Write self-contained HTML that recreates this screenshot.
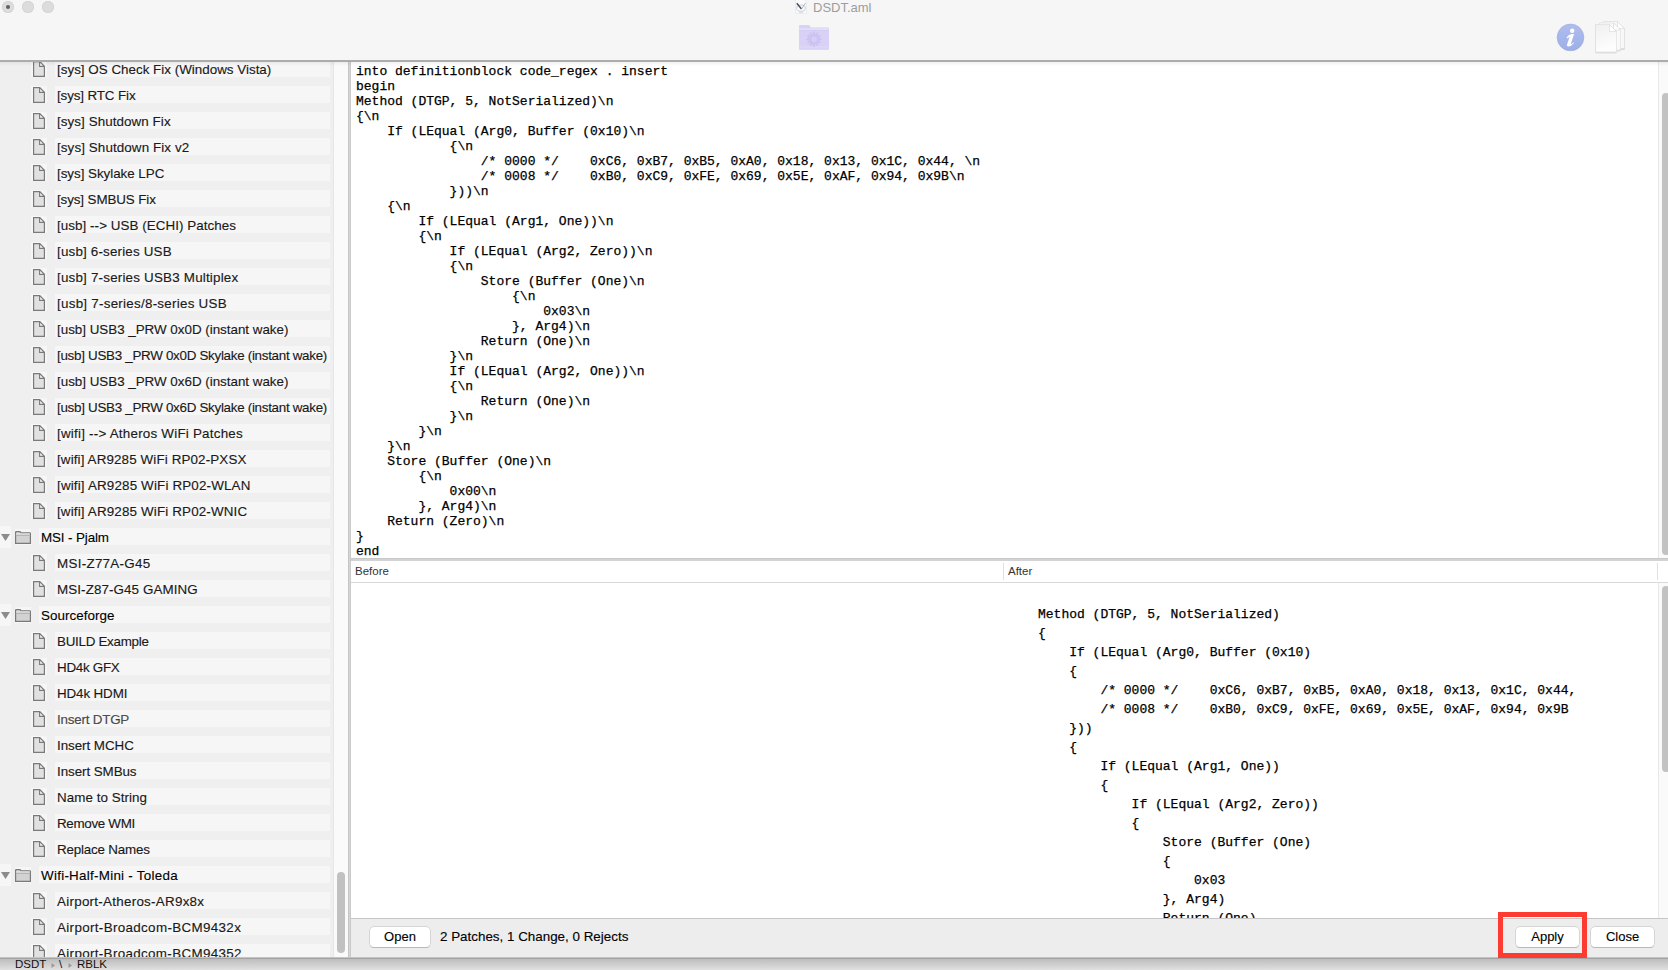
<!DOCTYPE html>
<html><head><meta charset="utf-8">
<style>
html,body{margin:0;padding:0;}
body{width:1668px;height:970px;overflow:hidden;position:relative;background:#f6f6f6;font-family:"Liberation Sans",sans-serif;}
.abs{position:absolute;}
#titlebar{left:0;top:0;width:1668px;height:60px;background:#f6f6f6;}
#tbline{left:0;top:60px;width:1668px;height:2px;background:#acacac;}
.tl{position:absolute;top:1px;width:12px;height:12px;border-radius:50%;background:#dcdcdc;box-shadow:inset 0 0 0 0.6px #cfcfcf;}
#title{left:813px;top:0px;font-size:13px;color:#9d9d9d;white-space:pre;}
#sidebar{left:0;top:62px;width:333px;height:895px;background:#efefef;overflow:hidden;}
.row{position:absolute;left:0;height:26px;width:333px;}
.ib{position:absolute;background:#f6f6f6;}
.tx{position:absolute;font-size:13.4px;color:#000;white-space:pre;line-height:17px;-webkit-text-stroke:0.12px #000;}
#sbtrack{left:333px;top:62px;width:15px;height:895px;background:#fafafa;border-left:1px solid #e6e6e6;box-sizing:border-box;}
#sbthumb{left:337px;top:872px;width:8px;height:81px;border-radius:4px;background:#c1c1c1;}
#sheetL{left:348px;top:62px;width:3px;height:896px;background:linear-gradient(to right,#c5c5c5 0,#c5c5c5 1px,#d6d6d6 1px,#d6d6d6 2px,#cacaca 2px,#cacaca 3px);}
#code{left:351px;top:62px;width:1307px;height:496px;background:#fff;overflow:hidden;}
#code pre{margin:0;position:absolute;left:5px;top:2px;font-family:"Liberation Mono",monospace;font-size:13px;line-height:15px;color:#000;-webkit-text-stroke:0.25px #000;}
.vtrack{background:#fafafa;border-left:1px solid #e8e8e8;box-sizing:border-box;}
.thumb{background:#c2c2c2;border-radius:4px;}
#split{left:351px;top:558px;width:1317px;height:3px;background:#d3d3d3;border-top:1px solid #c8c8c8;box-sizing:border-box;}
#hdr{left:351px;top:561px;width:1317px;height:22px;background:#fff;border-bottom:1px solid #d9d9d9;box-sizing:border-box;}
.hl{position:absolute;top:1px;font-size:11.5px;color:#333;line-height:18px;}
.hdiv{position:absolute;top:2px;width:1px;height:17px;background:#e0e0e0;}
#diff{left:351px;top:583px;width:1307px;height:335px;background:#fff;overflow:hidden;}
#diff pre{margin:0;position:absolute;left:687px;top:22px;font-family:"Liberation Mono",monospace;font-size:13px;line-height:19px;color:#000;-webkit-text-stroke:0.25px #000;}
#bbar{left:351px;top:918px;width:1317px;height:40px;background:#ededed;border-top:1px solid #c6c6c6;box-sizing:border-box;}
.btn{position:absolute;height:20px;background:#fff;border-radius:4px;box-shadow:0 0 0 0.5px #bdbdbd, 0 1px 0 0 #b3b3b3;font-size:13px;color:#000;text-align:center;line-height:19px;box-sizing:border-box;-webkit-text-stroke:0.12px #000;}
#status{left:0;top:957px;width:1668px;height:13px;background:linear-gradient(#c4c4c4 0,#c4c4c4 1px,#a3a3a3 1px,#a3a3a3 2px,#bdbdbd 2px,#e0e0e0 100%);overflow:hidden;}
#red{left:1498px;top:912px;width:89px;height:46px;border:5px solid #fe3b31;box-sizing:border-box;}
</style></head><body>
<div id="titlebar" class="abs">
  <div class="tl" style="left:2px;"><div style="position:absolute;left:4px;top:4px;width:4px;height:4px;border-radius:50%;background:#5f5f5f"></div></div>
  <div class="tl" style="left:22px;"></div>
  <div class="tl" style="left:42px;"></div>
  <div id="title" class="abs">DSDT.aml</div>

  <svg class="abs" style="left:795px;top:0px" width="12" height="14" viewBox="0 0 12 14"><path d="M0.5 -1H8.5L11.5 2V13.5H0.5Z" fill="#fbfbfb" stroke="#e8e8e8" stroke-width="0.8"/><ellipse cx="6" cy="8.2" rx="4.3" ry="3.2" fill="none" stroke="#b6cde6" stroke-width="0.9"/><path d="M1.8 3.2L6.5 9" fill="none" stroke="#4d4d4d" stroke-width="1.4"/><path d="M6.5 9L10.5 3" fill="none" stroke="#9a9a9a" stroke-width="0.7"/><path d="M4 12.6H8" stroke="#d5d5d5" stroke-width="0.8"/></svg>
  <svg class="abs" style="left:798px;top:24px" width="32" height="27" viewBox="0 0 32 27">
    <defs><filter id="fs" x="-10%" y="-10%" width="120%" height="130%"><feDropShadow dx="0" dy="0.6" stdDeviation="0.5" flood-color="#000" flood-opacity="0.18"/></filter></defs>
    <g filter="url(#fs)"><path d="M1 2.2Q1 1 2.2 1H11L13 3.6H29.8Q31 3.6 31 4.8V24Q31 25 30 25H2Q1 25 1 24Z" fill="#d9d2f6"/></g>
    <path d="M1.5 4.2H30.5V6.2H1.5Z" fill="#e4def9"/>
    <path d="M1.5 6.5H30.5" stroke="#cfc7f1" stroke-width="0.6"/>
    <path d="M1.5 23H30.5" stroke="#e2dcf8" stroke-width="0.8"/>
    <g transform="translate(16 15.2)" fill="#cbc3f2">
      <circle r="5.6"/>
      <g id="teeth"><rect x="-1" y="-7.6" width="2" height="2.6"/><rect x="-1" y="5" width="2" height="2.6"/><rect x="-7.6" y="-1" width="2.6" height="2"/><rect x="5" y="-1" width="2.6" height="2"/></g>
      <g transform="rotate(30)"><rect x="-1" y="-7.6" width="2" height="2.6"/><rect x="-1" y="5" width="2" height="2.6"/><rect x="-7.6" y="-1" width="2.6" height="2"/><rect x="5" y="-1" width="2.6" height="2"/></g>
      <g transform="rotate(60)"><rect x="-1" y="-7.6" width="2" height="2.6"/><rect x="-1" y="5" width="2" height="2.6"/><rect x="-7.6" y="-1" width="2.6" height="2"/><rect x="5" y="-1" width="2.6" height="2"/></g>
      <circle r="2.8" fill="#d6cff5"/>
    </g>
  </svg>
  <svg class="abs" style="left:1555px;top:22px" width="31" height="31" viewBox="0 0 31 31">
    <defs><linearGradient id="ig" x1="0" y1="0" x2="0" y2="1"><stop offset="0" stop-color="#b0bdee"/><stop offset="1" stop-color="#9cafe7"/></linearGradient></defs>
    <circle cx="15.5" cy="15.4" r="13.4" fill="url(#ig)" stroke="#9aa8d4" stroke-width="0.5"/>
    <circle cx="17.2" cy="8.7" r="2.2" fill="#fff"/>
    <path d="M11.6 15.6Q13.6 12.3 16.8 12.0L19.1 12.0L15.8 22.0Q15.6 22.9 16.6 22.1L18.7 20.0L18.5 21.4Q15.8 24.7 13.4 24.6Q11.5 24.4 12.0 22.5L14.6 14.9Q13.6 15.2 12.6 16.4Z" fill="#fff"/>
  </svg>
  <svg class="abs" style="left:1592px;top:19px" width="38" height="37" viewBox="0 0 38 37">
    <defs><filter id="ds" x="-20%" y="-20%" width="140%" height="140%"><feDropShadow dx="0" dy="0.6" stdDeviation="0.6" flood-color="#000" flood-opacity="0.25"/></filter>
    <linearGradient id="pg" x1="0" y1="0" x2="0.3" y2="1"><stop offset="0" stop-color="#f0f0f0"/><stop offset="1" stop-color="#fdfdfd"/></linearGradient></defs>
    <g filter="url(#ds)">
      <path d="M11.5 2.5H25.5L32.5 9.5V29.5H11.5Z" fill="#f8f8f8" stroke="#dedede" stroke-width="0.6"/>
      <path d="M25.5 2.5V9.5H32.5Z" fill="#fff" stroke="#d6d6d6" stroke-width="0.6"/>
      <path d="M7.5 4H21.5L28.5 11V31H7.5Z" fill="#f9f9f9" stroke="#dedede" stroke-width="0.6"/>
      <path d="M21.5 4V11H28.5Z" fill="#fff" stroke="#d6d6d6" stroke-width="0.6"/>
      <path d="M3.5 5.5H17.5L24.5 12.5V33H3.5Z" fill="url(#pg)" stroke="#dcdcdc" stroke-width="0.6"/>
      <path d="M17.5 5.5V12.5H24.5Z" fill="#fff" stroke="#d6d6d6" stroke-width="0.6"/>
    </g>
  </svg>
</div>
<div id="tbline" class="abs"></div>

<div id="sidebar" class="abs">
<div class="ib abs" style="left:31px;top:-2px;width:16px;height:17px"></div>
<div class="ib abs" style="left:55px;top:-2px;width:275px;height:17px"></div>
<svg class="abs" style="left:33px;top:-1px" width="12" height="16" viewBox="0 0 12 16"><path d="M0.6 0.6H6.6L11.4 5.4V15.4H0.6Z" fill="#e1e1e1" stroke="#7a7a7a" stroke-width="1.2" stroke-linejoin="miter"/><path d="M6.6 0.6V5.4H11.4Z" fill="#fcfcfc" stroke="#7a7a7a" stroke-width="1.1"/></svg>
<div class="tx abs" style="left:57px;top:-1px;color:#1c1c1c;letter-spacing:0.007px">[sys] OS Check Fix (Windows Vista)</div>
<div class="ib abs" style="left:31px;top:24px;width:16px;height:17px"></div>
<div class="ib abs" style="left:55px;top:24px;width:275px;height:17px"></div>
<svg class="abs" style="left:33px;top:25px" width="12" height="16" viewBox="0 0 12 16"><path d="M0.6 0.6H6.6L11.4 5.4V15.4H0.6Z" fill="#e1e1e1" stroke="#7a7a7a" stroke-width="1.2" stroke-linejoin="miter"/><path d="M6.6 0.6V5.4H11.4Z" fill="#fcfcfc" stroke="#7a7a7a" stroke-width="1.1"/></svg>
<div class="tx abs" style="left:57px;top:25px;color:#1c1c1c;letter-spacing:-0.124px">[sys] RTC Fix</div>
<div class="ib abs" style="left:31px;top:50px;width:16px;height:17px"></div>
<div class="ib abs" style="left:55px;top:50px;width:275px;height:17px"></div>
<svg class="abs" style="left:33px;top:51px" width="12" height="16" viewBox="0 0 12 16"><path d="M0.6 0.6H6.6L11.4 5.4V15.4H0.6Z" fill="#e1e1e1" stroke="#7a7a7a" stroke-width="1.2" stroke-linejoin="miter"/><path d="M6.6 0.6V5.4H11.4Z" fill="#fcfcfc" stroke="#7a7a7a" stroke-width="1.1"/></svg>
<div class="tx abs" style="left:57px;top:51px;color:#1c1c1c;letter-spacing:0.073px">[sys] Shutdown Fix</div>
<div class="ib abs" style="left:31px;top:76px;width:16px;height:17px"></div>
<div class="ib abs" style="left:55px;top:76px;width:275px;height:17px"></div>
<svg class="abs" style="left:33px;top:77px" width="12" height="16" viewBox="0 0 12 16"><path d="M0.6 0.6H6.6L11.4 5.4V15.4H0.6Z" fill="#e1e1e1" stroke="#7a7a7a" stroke-width="1.2" stroke-linejoin="miter"/><path d="M6.6 0.6V5.4H11.4Z" fill="#fcfcfc" stroke="#7a7a7a" stroke-width="1.1"/></svg>
<div class="tx abs" style="left:57px;top:77px;color:#1c1c1c;letter-spacing:0.098px">[sys] Shutdown Fix v2</div>
<div class="ib abs" style="left:31px;top:102px;width:16px;height:17px"></div>
<div class="ib abs" style="left:55px;top:102px;width:275px;height:17px"></div>
<svg class="abs" style="left:33px;top:103px" width="12" height="16" viewBox="0 0 12 16"><path d="M0.6 0.6H6.6L11.4 5.4V15.4H0.6Z" fill="#e1e1e1" stroke="#7a7a7a" stroke-width="1.2" stroke-linejoin="miter"/><path d="M6.6 0.6V5.4H11.4Z" fill="#fcfcfc" stroke="#7a7a7a" stroke-width="1.1"/></svg>
<div class="tx abs" style="left:57px;top:103px;color:#1c1c1c;letter-spacing:-0.036px">[sys] Skylake LPC</div>
<div class="ib abs" style="left:31px;top:128px;width:16px;height:17px"></div>
<div class="ib abs" style="left:55px;top:128px;width:275px;height:17px"></div>
<svg class="abs" style="left:33px;top:129px" width="12" height="16" viewBox="0 0 12 16"><path d="M0.6 0.6H6.6L11.4 5.4V15.4H0.6Z" fill="#e1e1e1" stroke="#7a7a7a" stroke-width="1.2" stroke-linejoin="miter"/><path d="M6.6 0.6V5.4H11.4Z" fill="#fcfcfc" stroke="#7a7a7a" stroke-width="1.1"/></svg>
<div class="tx abs" style="left:57px;top:129px;color:#1c1c1c;letter-spacing:-0.109px">[sys] SMBUS Fix</div>
<div class="ib abs" style="left:31px;top:154px;width:16px;height:17px"></div>
<div class="ib abs" style="left:55px;top:154px;width:275px;height:17px"></div>
<svg class="abs" style="left:33px;top:155px" width="12" height="16" viewBox="0 0 12 16"><path d="M0.6 0.6H6.6L11.4 5.4V15.4H0.6Z" fill="#e1e1e1" stroke="#7a7a7a" stroke-width="1.2" stroke-linejoin="miter"/><path d="M6.6 0.6V5.4H11.4Z" fill="#fcfcfc" stroke="#7a7a7a" stroke-width="1.1"/></svg>
<div class="tx abs" style="left:57px;top:155px;color:#1c1c1c;letter-spacing:0.058px">[usb] --&gt; USB (ECHI) Patches</div>
<div class="ib abs" style="left:31px;top:180px;width:16px;height:17px"></div>
<div class="ib abs" style="left:55px;top:180px;width:275px;height:17px"></div>
<svg class="abs" style="left:33px;top:181px" width="12" height="16" viewBox="0 0 12 16"><path d="M0.6 0.6H6.6L11.4 5.4V15.4H0.6Z" fill="#e1e1e1" stroke="#7a7a7a" stroke-width="1.2" stroke-linejoin="miter"/><path d="M6.6 0.6V5.4H11.4Z" fill="#fcfcfc" stroke="#7a7a7a" stroke-width="1.1"/></svg>
<div class="tx abs" style="left:57px;top:181px;color:#1c1c1c;letter-spacing:0.176px">[usb] 6-series USB</div>
<div class="ib abs" style="left:31px;top:206px;width:16px;height:17px"></div>
<div class="ib abs" style="left:55px;top:206px;width:275px;height:17px"></div>
<svg class="abs" style="left:33px;top:207px" width="12" height="16" viewBox="0 0 12 16"><path d="M0.6 0.6H6.6L11.4 5.4V15.4H0.6Z" fill="#e1e1e1" stroke="#7a7a7a" stroke-width="1.2" stroke-linejoin="miter"/><path d="M6.6 0.6V5.4H11.4Z" fill="#fcfcfc" stroke="#7a7a7a" stroke-width="1.1"/></svg>
<div class="tx abs" style="left:57px;top:207px;color:#1c1c1c;letter-spacing:0.199px">[usb] 7-series USB3 Multiplex</div>
<div class="ib abs" style="left:31px;top:232px;width:16px;height:17px"></div>
<div class="ib abs" style="left:55px;top:232px;width:275px;height:17px"></div>
<svg class="abs" style="left:33px;top:233px" width="12" height="16" viewBox="0 0 12 16"><path d="M0.6 0.6H6.6L11.4 5.4V15.4H0.6Z" fill="#e1e1e1" stroke="#7a7a7a" stroke-width="1.2" stroke-linejoin="miter"/><path d="M6.6 0.6V5.4H11.4Z" fill="#fcfcfc" stroke="#7a7a7a" stroke-width="1.1"/></svg>
<div class="tx abs" style="left:57px;top:233px;color:#1c1c1c;letter-spacing:0.256px">[usb] 7-series/8-series USB</div>
<div class="ib abs" style="left:31px;top:258px;width:16px;height:17px"></div>
<div class="ib abs" style="left:55px;top:258px;width:275px;height:17px"></div>
<svg class="abs" style="left:33px;top:259px" width="12" height="16" viewBox="0 0 12 16"><path d="M0.6 0.6H6.6L11.4 5.4V15.4H0.6Z" fill="#e1e1e1" stroke="#7a7a7a" stroke-width="1.2" stroke-linejoin="miter"/><path d="M6.6 0.6V5.4H11.4Z" fill="#fcfcfc" stroke="#7a7a7a" stroke-width="1.1"/></svg>
<div class="tx abs" style="left:57px;top:259px;color:#1c1c1c;letter-spacing:-0.016px">[usb] USB3 _PRW 0x0D (instant wake)</div>
<div class="ib abs" style="left:31px;top:284px;width:16px;height:17px"></div>
<div class="ib abs" style="left:55px;top:284px;width:275px;height:17px"></div>
<svg class="abs" style="left:33px;top:285px" width="12" height="16" viewBox="0 0 12 16"><path d="M0.6 0.6H6.6L11.4 5.4V15.4H0.6Z" fill="#e1e1e1" stroke="#7a7a7a" stroke-width="1.2" stroke-linejoin="miter"/><path d="M6.6 0.6V5.4H11.4Z" fill="#fcfcfc" stroke="#7a7a7a" stroke-width="1.1"/></svg>
<div class="tx abs" style="left:57px;top:285px;color:#1c1c1c;letter-spacing:-0.292px">[usb] USB3 _PRW 0x0D Skylake (instant wake)</div>
<div class="ib abs" style="left:31px;top:310px;width:16px;height:17px"></div>
<div class="ib abs" style="left:55px;top:310px;width:275px;height:17px"></div>
<svg class="abs" style="left:33px;top:311px" width="12" height="16" viewBox="0 0 12 16"><path d="M0.6 0.6H6.6L11.4 5.4V15.4H0.6Z" fill="#e1e1e1" stroke="#7a7a7a" stroke-width="1.2" stroke-linejoin="miter"/><path d="M6.6 0.6V5.4H11.4Z" fill="#fcfcfc" stroke="#7a7a7a" stroke-width="1.1"/></svg>
<div class="tx abs" style="left:57px;top:311px;color:#1c1c1c;letter-spacing:-0.016px">[usb] USB3 _PRW 0x6D (instant wake)</div>
<div class="ib abs" style="left:31px;top:336px;width:16px;height:17px"></div>
<div class="ib abs" style="left:55px;top:336px;width:275px;height:17px"></div>
<svg class="abs" style="left:33px;top:337px" width="12" height="16" viewBox="0 0 12 16"><path d="M0.6 0.6H6.6L11.4 5.4V15.4H0.6Z" fill="#e1e1e1" stroke="#7a7a7a" stroke-width="1.2" stroke-linejoin="miter"/><path d="M6.6 0.6V5.4H11.4Z" fill="#fcfcfc" stroke="#7a7a7a" stroke-width="1.1"/></svg>
<div class="tx abs" style="left:57px;top:337px;color:#1c1c1c;letter-spacing:-0.292px">[usb] USB3 _PRW 0x6D Skylake (instant wake)</div>
<div class="ib abs" style="left:31px;top:362px;width:16px;height:17px"></div>
<div class="ib abs" style="left:55px;top:362px;width:275px;height:17px"></div>
<svg class="abs" style="left:33px;top:363px" width="12" height="16" viewBox="0 0 12 16"><path d="M0.6 0.6H6.6L11.4 5.4V15.4H0.6Z" fill="#e1e1e1" stroke="#7a7a7a" stroke-width="1.2" stroke-linejoin="miter"/><path d="M6.6 0.6V5.4H11.4Z" fill="#fcfcfc" stroke="#7a7a7a" stroke-width="1.1"/></svg>
<div class="tx abs" style="left:57px;top:363px;color:#1c1c1c;letter-spacing:0.224px">[wifi] --&gt; Atheros WiFi Patches</div>
<div class="ib abs" style="left:31px;top:388px;width:16px;height:17px"></div>
<div class="ib abs" style="left:55px;top:388px;width:275px;height:17px"></div>
<svg class="abs" style="left:33px;top:389px" width="12" height="16" viewBox="0 0 12 16"><path d="M0.6 0.6H6.6L11.4 5.4V15.4H0.6Z" fill="#e1e1e1" stroke="#7a7a7a" stroke-width="1.2" stroke-linejoin="miter"/><path d="M6.6 0.6V5.4H11.4Z" fill="#fcfcfc" stroke="#7a7a7a" stroke-width="1.1"/></svg>
<div class="tx abs" style="left:57px;top:389px;color:#1c1c1c;letter-spacing:0.123px">[wifi] AR9285 WiFi RP02-PXSX</div>
<div class="ib abs" style="left:31px;top:414px;width:16px;height:17px"></div>
<div class="ib abs" style="left:55px;top:414px;width:275px;height:17px"></div>
<svg class="abs" style="left:33px;top:415px" width="12" height="16" viewBox="0 0 12 16"><path d="M0.6 0.6H6.6L11.4 5.4V15.4H0.6Z" fill="#e1e1e1" stroke="#7a7a7a" stroke-width="1.2" stroke-linejoin="miter"/><path d="M6.6 0.6V5.4H11.4Z" fill="#fcfcfc" stroke="#7a7a7a" stroke-width="1.1"/></svg>
<div class="tx abs" style="left:57px;top:415px;color:#1c1c1c;letter-spacing:0.16px">[wifi] AR9285 WiFi RP02-WLAN</div>
<div class="ib abs" style="left:31px;top:440px;width:16px;height:17px"></div>
<div class="ib abs" style="left:55px;top:440px;width:275px;height:17px"></div>
<svg class="abs" style="left:33px;top:441px" width="12" height="16" viewBox="0 0 12 16"><path d="M0.6 0.6H6.6L11.4 5.4V15.4H0.6Z" fill="#e1e1e1" stroke="#7a7a7a" stroke-width="1.2" stroke-linejoin="miter"/><path d="M6.6 0.6V5.4H11.4Z" fill="#fcfcfc" stroke="#7a7a7a" stroke-width="1.1"/></svg>
<div class="tx abs" style="left:57px;top:441px;color:#1c1c1c;letter-spacing:0.152px">[wifi] AR9285 WiFi RP02-WNIC</div>
<div class="ib abs" style="left:0px;top:464px;width:11px;height:22px"></div>
<div class="ib abs" style="left:15px;top:467px;width:16px;height:16px"></div>
<div class="ib abs" style="left:39px;top:466px;width:291px;height:17px"></div>
<svg class="abs" style="left:0px;top:471px" width="11" height="9" viewBox="0 0 11 9"><path d="M1 1H10L5.5 8Z" fill="#8c8c8c"/></svg>
<svg class="abs" style="left:15px;top:469px" width="16" height="13" viewBox="0 0 16 13"><path d="M0.6 1.2Q0.6 0.6 1.2 0.6H5L6 1.8H14.8Q15.4 1.8 15.4 2.4V12.4H0.6Z" fill="#d2d2d2" stroke="#7a7a7a" stroke-width="1.2"/><path d="M1.2 2.4H14.8V4.2H1.2Z" fill="#e9e9e9"/><path d="M0.6 4.2H15.4" stroke="#9a9a9a" stroke-width="0.8"/></svg>
<div class="tx abs" style="left:41px;top:467px;letter-spacing:-0.118px">MSI - Pjalm</div>
<div class="ib abs" style="left:31px;top:492px;width:16px;height:17px"></div>
<div class="ib abs" style="left:55px;top:492px;width:275px;height:17px"></div>
<svg class="abs" style="left:33px;top:493px" width="12" height="16" viewBox="0 0 12 16"><path d="M0.6 0.6H6.6L11.4 5.4V15.4H0.6Z" fill="#e1e1e1" stroke="#7a7a7a" stroke-width="1.2" stroke-linejoin="miter"/><path d="M6.6 0.6V5.4H11.4Z" fill="#fcfcfc" stroke="#7a7a7a" stroke-width="1.1"/></svg>
<div class="tx abs" style="left:57px;top:493px;color:#1c1c1c;letter-spacing:0.288px">MSI-Z77A-G45</div>
<div class="ib abs" style="left:31px;top:518px;width:16px;height:17px"></div>
<div class="ib abs" style="left:55px;top:518px;width:275px;height:17px"></div>
<svg class="abs" style="left:33px;top:519px" width="12" height="16" viewBox="0 0 12 16"><path d="M0.6 0.6H6.6L11.4 5.4V15.4H0.6Z" fill="#e1e1e1" stroke="#7a7a7a" stroke-width="1.2" stroke-linejoin="miter"/><path d="M6.6 0.6V5.4H11.4Z" fill="#fcfcfc" stroke="#7a7a7a" stroke-width="1.1"/></svg>
<div class="tx abs" style="left:57px;top:519px;color:#1c1c1c;letter-spacing:0.092px">MSI-Z87-G45 GAMING</div>
<div class="ib abs" style="left:0px;top:542px;width:11px;height:22px"></div>
<div class="ib abs" style="left:15px;top:545px;width:16px;height:16px"></div>
<div class="ib abs" style="left:39px;top:544px;width:291px;height:17px"></div>
<svg class="abs" style="left:0px;top:549px" width="11" height="9" viewBox="0 0 11 9"><path d="M1 1H10L5.5 8Z" fill="#8c8c8c"/></svg>
<svg class="abs" style="left:15px;top:547px" width="16" height="13" viewBox="0 0 16 13"><path d="M0.6 1.2Q0.6 0.6 1.2 0.6H5L6 1.8H14.8Q15.4 1.8 15.4 2.4V12.4H0.6Z" fill="#d2d2d2" stroke="#7a7a7a" stroke-width="1.2"/><path d="M1.2 2.4H14.8V4.2H1.2Z" fill="#e9e9e9"/><path d="M0.6 4.2H15.4" stroke="#9a9a9a" stroke-width="0.8"/></svg>
<div class="tx abs" style="left:41px;top:545px;letter-spacing:0.05px">Sourceforge</div>
<div class="ib abs" style="left:31px;top:570px;width:16px;height:17px"></div>
<div class="ib abs" style="left:55px;top:570px;width:275px;height:17px"></div>
<svg class="abs" style="left:33px;top:571px" width="12" height="16" viewBox="0 0 12 16"><path d="M0.6 0.6H6.6L11.4 5.4V15.4H0.6Z" fill="#e1e1e1" stroke="#7a7a7a" stroke-width="1.2" stroke-linejoin="miter"/><path d="M6.6 0.6V5.4H11.4Z" fill="#fcfcfc" stroke="#7a7a7a" stroke-width="1.1"/></svg>
<div class="tx abs" style="left:57px;top:571px;color:#1c1c1c;letter-spacing:-0.282px">BUILD Example</div>
<div class="ib abs" style="left:31px;top:596px;width:16px;height:17px"></div>
<div class="ib abs" style="left:55px;top:596px;width:275px;height:17px"></div>
<svg class="abs" style="left:33px;top:597px" width="12" height="16" viewBox="0 0 12 16"><path d="M0.6 0.6H6.6L11.4 5.4V15.4H0.6Z" fill="#e1e1e1" stroke="#7a7a7a" stroke-width="1.2" stroke-linejoin="miter"/><path d="M6.6 0.6V5.4H11.4Z" fill="#fcfcfc" stroke="#7a7a7a" stroke-width="1.1"/></svg>
<div class="tx abs" style="left:57px;top:597px;color:#1c1c1c;letter-spacing:-0.279px">HD4k GFX</div>
<div class="ib abs" style="left:31px;top:622px;width:16px;height:17px"></div>
<div class="ib abs" style="left:55px;top:622px;width:275px;height:17px"></div>
<svg class="abs" style="left:33px;top:623px" width="12" height="16" viewBox="0 0 12 16"><path d="M0.6 0.6H6.6L11.4 5.4V15.4H0.6Z" fill="#e1e1e1" stroke="#7a7a7a" stroke-width="1.2" stroke-linejoin="miter"/><path d="M6.6 0.6V5.4H11.4Z" fill="#fcfcfc" stroke="#7a7a7a" stroke-width="1.1"/></svg>
<div class="tx abs" style="left:57px;top:623px;color:#1c1c1c;letter-spacing:-0.125px">HD4k HDMI</div>
<div class="ib abs" style="left:31px;top:648px;width:16px;height:17px"></div>
<div class="ib abs" style="left:55px;top:648px;width:275px;height:17px"></div>
<svg class="abs" style="left:33px;top:649px" width="12" height="16" viewBox="0 0 12 16"><path d="M0.6 0.6H6.6L11.4 5.4V15.4H0.6Z" fill="#e1e1e1" stroke="#7a7a7a" stroke-width="1.2" stroke-linejoin="miter"/><path d="M6.6 0.6V5.4H11.4Z" fill="#fcfcfc" stroke="#7a7a7a" stroke-width="1.1"/></svg>
<div class="tx abs" style="left:57px;top:649px;color:#505050;letter-spacing:-0.211px">Insert DTGP</div>
<div class="ib abs" style="left:31px;top:674px;width:16px;height:17px"></div>
<div class="ib abs" style="left:55px;top:674px;width:275px;height:17px"></div>
<svg class="abs" style="left:33px;top:675px" width="12" height="16" viewBox="0 0 12 16"><path d="M0.6 0.6H6.6L11.4 5.4V15.4H0.6Z" fill="#e1e1e1" stroke="#7a7a7a" stroke-width="1.2" stroke-linejoin="miter"/><path d="M6.6 0.6V5.4H11.4Z" fill="#fcfcfc" stroke="#7a7a7a" stroke-width="1.1"/></svg>
<div class="tx abs" style="left:57px;top:675px;color:#1c1c1c;letter-spacing:-0.054px">Insert MCHC</div>
<div class="ib abs" style="left:31px;top:700px;width:16px;height:17px"></div>
<div class="ib abs" style="left:55px;top:700px;width:275px;height:17px"></div>
<svg class="abs" style="left:33px;top:701px" width="12" height="16" viewBox="0 0 12 16"><path d="M0.6 0.6H6.6L11.4 5.4V15.4H0.6Z" fill="#e1e1e1" stroke="#7a7a7a" stroke-width="1.2" stroke-linejoin="miter"/><path d="M6.6 0.6V5.4H11.4Z" fill="#fcfcfc" stroke="#7a7a7a" stroke-width="1.1"/></svg>
<div class="tx abs" style="left:57px;top:701px;color:#1c1c1c;letter-spacing:-0.073px">Insert SMBus</div>
<div class="ib abs" style="left:31px;top:726px;width:16px;height:17px"></div>
<div class="ib abs" style="left:55px;top:726px;width:275px;height:17px"></div>
<svg class="abs" style="left:33px;top:727px" width="12" height="16" viewBox="0 0 12 16"><path d="M0.6 0.6H6.6L11.4 5.4V15.4H0.6Z" fill="#e1e1e1" stroke="#7a7a7a" stroke-width="1.2" stroke-linejoin="miter"/><path d="M6.6 0.6V5.4H11.4Z" fill="#fcfcfc" stroke="#7a7a7a" stroke-width="1.1"/></svg>
<div class="tx abs" style="left:57px;top:727px;color:#1c1c1c;letter-spacing:0.042px">Name to String</div>
<div class="ib abs" style="left:31px;top:752px;width:16px;height:17px"></div>
<div class="ib abs" style="left:55px;top:752px;width:275px;height:17px"></div>
<svg class="abs" style="left:33px;top:753px" width="12" height="16" viewBox="0 0 12 16"><path d="M0.6 0.6H6.6L11.4 5.4V15.4H0.6Z" fill="#e1e1e1" stroke="#7a7a7a" stroke-width="1.2" stroke-linejoin="miter"/><path d="M6.6 0.6V5.4H11.4Z" fill="#fcfcfc" stroke="#7a7a7a" stroke-width="1.1"/></svg>
<div class="tx abs" style="left:57px;top:753px;color:#1c1c1c;letter-spacing:-0.321px">Remove WMI</div>
<div class="ib abs" style="left:31px;top:778px;width:16px;height:17px"></div>
<div class="ib abs" style="left:55px;top:778px;width:275px;height:17px"></div>
<svg class="abs" style="left:33px;top:779px" width="12" height="16" viewBox="0 0 12 16"><path d="M0.6 0.6H6.6L11.4 5.4V15.4H0.6Z" fill="#e1e1e1" stroke="#7a7a7a" stroke-width="1.2" stroke-linejoin="miter"/><path d="M6.6 0.6V5.4H11.4Z" fill="#fcfcfc" stroke="#7a7a7a" stroke-width="1.1"/></svg>
<div class="tx abs" style="left:57px;top:779px;color:#1c1c1c;letter-spacing:-0.197px">Replace Names</div>
<div class="ib abs" style="left:0px;top:802px;width:11px;height:22px"></div>
<div class="ib abs" style="left:15px;top:805px;width:16px;height:16px"></div>
<div class="ib abs" style="left:39px;top:804px;width:291px;height:17px"></div>
<svg class="abs" style="left:0px;top:809px" width="11" height="9" viewBox="0 0 11 9"><path d="M1 1H10L5.5 8Z" fill="#8c8c8c"/></svg>
<svg class="abs" style="left:15px;top:807px" width="16" height="13" viewBox="0 0 16 13"><path d="M0.6 1.2Q0.6 0.6 1.2 0.6H5L6 1.8H14.8Q15.4 1.8 15.4 2.4V12.4H0.6Z" fill="#d2d2d2" stroke="#7a7a7a" stroke-width="1.2"/><path d="M1.2 2.4H14.8V4.2H1.2Z" fill="#e9e9e9"/><path d="M0.6 4.2H15.4" stroke="#9a9a9a" stroke-width="0.8"/></svg>
<div class="tx abs" style="left:41px;top:805px;letter-spacing:0.269px">Wifi-Half-Mini - Toleda</div>
<div class="ib abs" style="left:31px;top:830px;width:16px;height:17px"></div>
<div class="ib abs" style="left:55px;top:830px;width:275px;height:17px"></div>
<svg class="abs" style="left:33px;top:831px" width="12" height="16" viewBox="0 0 12 16"><path d="M0.6 0.6H6.6L11.4 5.4V15.4H0.6Z" fill="#e1e1e1" stroke="#7a7a7a" stroke-width="1.2" stroke-linejoin="miter"/><path d="M6.6 0.6V5.4H11.4Z" fill="#fcfcfc" stroke="#7a7a7a" stroke-width="1.1"/></svg>
<div class="tx abs" style="left:57px;top:831px;color:#1c1c1c;letter-spacing:0.268px">Airport-Atheros-AR9x8x</div>
<div class="ib abs" style="left:31px;top:856px;width:16px;height:17px"></div>
<div class="ib abs" style="left:55px;top:856px;width:275px;height:17px"></div>
<svg class="abs" style="left:33px;top:857px" width="12" height="16" viewBox="0 0 12 16"><path d="M0.6 0.6H6.6L11.4 5.4V15.4H0.6Z" fill="#e1e1e1" stroke="#7a7a7a" stroke-width="1.2" stroke-linejoin="miter"/><path d="M6.6 0.6V5.4H11.4Z" fill="#fcfcfc" stroke="#7a7a7a" stroke-width="1.1"/></svg>
<div class="tx abs" style="left:57px;top:857px;color:#1c1c1c;letter-spacing:0.342px">Airport-Broadcom-BCM9432x</div>
<div class="ib abs" style="left:31px;top:882px;width:16px;height:17px"></div>
<div class="ib abs" style="left:55px;top:882px;width:275px;height:17px"></div>
<svg class="abs" style="left:33px;top:883px" width="12" height="16" viewBox="0 0 12 16"><path d="M0.6 0.6H6.6L11.4 5.4V15.4H0.6Z" fill="#e1e1e1" stroke="#7a7a7a" stroke-width="1.2" stroke-linejoin="miter"/><path d="M6.6 0.6V5.4H11.4Z" fill="#fcfcfc" stroke="#7a7a7a" stroke-width="1.1"/></svg>
<div class="tx abs" style="left:57px;top:883px;color:#1c1c1c;letter-spacing:0.34px">Airport-Broadcom-BCM94352</div>
</div>
<div id="sbtrack" class="abs"></div>
<div id="sbthumb" class="abs"></div>

<div id="sheetL" class="abs"></div>
<div id="code" class="abs"><pre>into definitionblock code_regex . insert
begin
Method (DTGP, 5, NotSerialized)\n
{\n
    If (LEqual (Arg0, Buffer (0x10)\n
            {\n
                /* 0000 */    0xC6, 0xB7, 0xB5, 0xA0, 0x18, 0x13, 0x1C, 0x44, \n
                /* 0008 */    0xB0, 0xC9, 0xFE, 0x69, 0x5E, 0xAF, 0x94, 0x9B\n
            }))\n
    {\n
        If (LEqual (Arg1, One))\n
        {\n
            If (LEqual (Arg2, Zero))\n
            {\n
                Store (Buffer (One)\n
                    {\n
                        0x03\n
                    }, Arg4)\n
                Return (One)\n
            }\n
            If (LEqual (Arg2, One))\n
            {\n
                Return (One)\n
            }\n
        }\n
    }\n
    Store (Buffer (One)\n
        {\n
            0x00\n
        }, Arg4)\n
    Return (Zero)\n
}
end</pre></div>
<div class="abs vtrack" style="left:1658px;top:62px;width:10px;height:496px;"></div>
<div class="abs thumb" style="left:1662px;top:93px;width:8px;height:462px;"></div>
<div id="split" class="abs"></div>
<div id="hdr" class="abs">
  <div class="hl" style="left:4px">Before</div>
  <div class="hdiv" style="left:652px"></div>
  <div class="hl" style="left:657px">After</div>
  <div class="hdiv" style="left:1306px"></div>
</div>
<div id="diff" class="abs"><pre>Method (DTGP, 5, NotSerialized)
{
    If (LEqual (Arg0, Buffer (0x10)
    {
        /* 0000 */    0xC6, 0xB7, 0xB5, 0xA0, 0x18, 0x13, 0x1C, 0x44,
        /* 0008 */    0xB0, 0xC9, 0xFE, 0x69, 0x5E, 0xAF, 0x94, 0x9B
    }))
    {
        If (LEqual (Arg1, One))
        {
            If (LEqual (Arg2, Zero))
            {
                Store (Buffer (One)
                {
                    0x03
                }, Arg4)
                Return (One)
            }</pre></div>
<div class="abs vtrack" style="left:1658px;top:583px;width:10px;height:335px;"></div>
<div class="abs thumb" style="left:1662px;top:586px;width:8px;height:186px;"></div>
<div id="bbar" class="abs">
  <div class="btn" style="left:19px;top:8px;width:60px;">Open</div>
  <div class="abs" style="left:89px;top:9px;font-size:13.4px;color:#000;line-height:17px;-webkit-text-stroke:0.12px #000;">2 Patches, 1 Change, 0 Rejects</div>
  <div class="btn" style="left:1165px;top:8px;width:63px;">Apply</div>
  <div class="btn" style="left:1240px;top:8px;width:63px;">Close</div>
</div>
<div class="abs" style="left:0;top:62px;width:1668px;height:4px;background:linear-gradient(rgba(0,0,0,0.055),rgba(0,0,0,0));"></div>
<div id="status" class="abs"><div class="abs" style="left:15px;top:1px;font-size:11.5px;line-height:13px;color:#111;white-space:pre">DSDT</div><svg class="abs" style="left:50px;top:5px" width="6" height="7"><path d="M1.5 1L5 3.5L1.5 6Z" fill="#9a9a9a"/></svg><div class="abs" style="left:59px;top:1px;font-size:11.5px;line-height:13px;color:#111">\</div><svg class="abs" style="left:67px;top:5px" width="6" height="7"><path d="M1.5 1L5 3.5L1.5 6Z" fill="#9a9a9a"/></svg><div class="abs" style="left:77px;top:1px;font-size:11.5px;line-height:13px;color:#111;white-space:pre">RBLK</div></div>
<div id="red" class="abs"></div>
</body></html>
